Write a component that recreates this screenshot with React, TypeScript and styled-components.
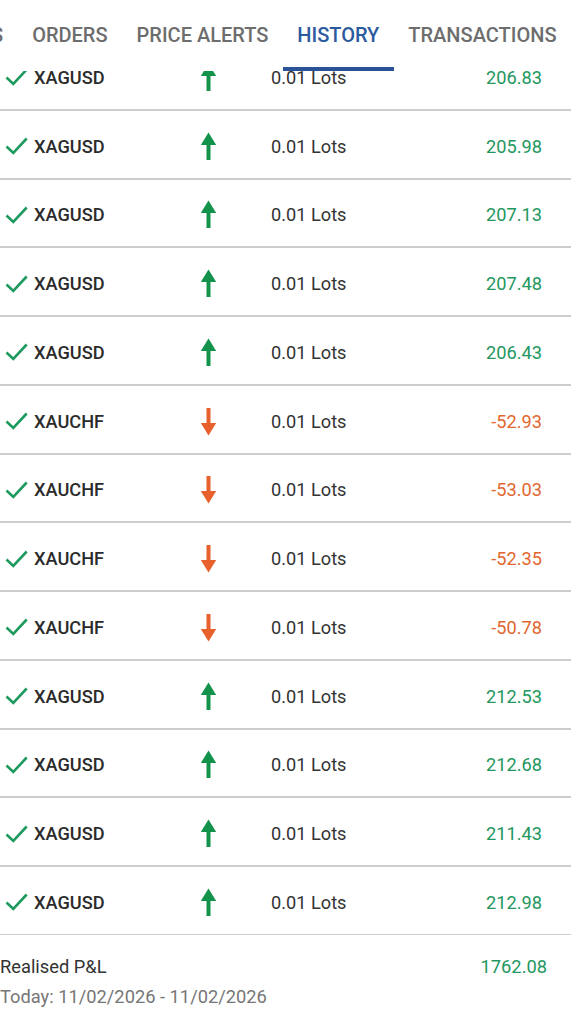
import React from "react";
import styled, { createGlobalStyle } from "styled-components";

const GlobalStyle = createGlobalStyle`
  html, body {
    margin: 0;
    padding: 0;
    background: #ffffff;
  }
  body {
    font-family: Roboto, "Noto Sans", "Liberation Sans", sans-serif;
  }
`;

const Page = styled.div`
  height: 100vh;
  display: flex;
  flex-direction: column;
  overflow: hidden;
  background: #ffffff;
`;

const TabBar = styled.div`
  height: 71px;
  flex-shrink: 0;
  display: flex;
  justify-content: flex-end;
  overflow: hidden;
  background: #ffffff;
`;

const Tab = styled.div<{ $active?: boolean }>`
  flex-shrink: 0;
  box-sizing: border-box;
  height: 71px;
  padding: 2px 14.5px 0;
  display: flex;
  align-items: center;
  white-space: nowrap;
  font-size: 20px;
  font-weight: 500;
  color: ${(p) => (p.$active ? "#2c5a9e" : "#6d6d6d")};
  border-bottom: 4px solid ${(p) => (p.$active ? "#2a5296" : "transparent")};
`;

const ListViewport = styled.div`
  flex: 1;
  overflow: hidden;
`;

const ListContent = styled.div`
  margin-top: -29px;
`;

const Row = styled.div`
  box-sizing: border-box;
  height: 68.75px;
  padding: 4px 29px 0 5px;
  border-bottom: 2px solid #cdcdcd;
  display: grid;
  grid-template-columns: 29px 160px 28px 1fr auto;
  align-items: center;
  font-size: 18.2px;
`;

const CheckCell = styled.div`
  display: flex;
  align-items: center;
`;

const Symbol = styled.div`
  font-weight: 500;
  color: #2b2b2b;
`;

const ArrowCell = styled.div`
  display: flex;
  justify-content: center;
  align-items: center;
`;

const Lots = styled.div`
  margin-left: 49px;
  color: #333333;
`;

const Value = styled.div<{ $up: boolean }>`
  text-align: right;
  color: ${(p) => (p.$up ? "#239760" : "#e2672f")};
`;

const Footer = styled.div`
  flex-shrink: 0;
  height: 88px;
  box-sizing: border-box;
  padding: 16.5px 24px 0 0;
  display: grid;
  grid-template-columns: 1fr auto;
  grid-auto-rows: 30px;
  align-items: center;
  font-size: 18.3px;
`;

const FooterLabel = styled.div`
  color: #333333;
`;

const FooterValue = styled.div`
  color: #239760;
  text-align: right;
`;

const FooterDate = styled.div`
  grid-column: 1 / -1;
  color: #767676;
`;

const CheckIcon = () => (
  <svg width="23" height="18" viewBox="0 0 23 18" fill="none">
    <polyline
      points="1.5,9.5 8.3,16 21.7,1.5"
      stroke="#1e9a5e"
      strokeWidth="2.6"
      strokeLinecap="butt"
      strokeLinejoin="miter"
    />
  </svg>
);

const ArrowIcon = ({ up }: { up: boolean }) => (
  <svg
    width="17"
    height="29"
    viewBox="0 0 17 29"
    style={{ transform: up ? undefined : "rotate(180deg)" }}
  >
    <g fill={up ? "#12924b" : "#e8612c"}>
      <polygon points="0.8,13 16.2,13 8.5,0.6" />
      <rect x="6.5" y="12.5" width="4" height="15.5" />
    </g>
  </svg>
);

type Trade = { symbol: string; up: boolean; value: string };

const trades: Trade[] = [
  { symbol: "XAGUSD", up: true, value: "206.83" },
  { symbol: "XAGUSD", up: true, value: "205.98" },
  { symbol: "XAGUSD", up: true, value: "207.13" },
  { symbol: "XAGUSD", up: true, value: "207.48" },
  { symbol: "XAGUSD", up: true, value: "206.43" },
  { symbol: "XAUCHF", up: false, value: "-52.93" },
  { symbol: "XAUCHF", up: false, value: "-53.03" },
  { symbol: "XAUCHF", up: false, value: "-52.35" },
  { symbol: "XAUCHF", up: false, value: "-50.78" },
  { symbol: "XAGUSD", up: true, value: "212.53" },
  { symbol: "XAGUSD", up: true, value: "212.68" },
  { symbol: "XAGUSD", up: true, value: "211.43" },
  { symbol: "XAGUSD", up: true, value: "212.98" },
];

const tabs = ["POSITIONS", "ORDERS", "PRICE ALERTS", "HISTORY", "TRANSACTIONS"];

export default function App() {
  return (
    <Page>
      <GlobalStyle />
      <TabBar>
        {tabs.map((t) => (
          <Tab key={t} $active={t === "HISTORY"}>
            {t}
          </Tab>
        ))}
      </TabBar>
      <ListViewport>
        <ListContent>
          {trades.map((tr, i) => (
            <Row key={i}>
              <CheckCell>
                <CheckIcon />
              </CheckCell>
              <Symbol>{tr.symbol}</Symbol>
              <ArrowCell>
                <ArrowIcon up={tr.up} />
              </ArrowCell>
              <Lots>0.01 Lots</Lots>
              <Value $up={tr.up}>{tr.value}</Value>
            </Row>
          ))}
        </ListContent>
      </ListViewport>
      <Footer>
        <FooterLabel>Realised P&amp;L</FooterLabel>
        <FooterValue>1762.08</FooterValue>
        <FooterDate>Today: 11/02/2026 - 11/02/2026</FooterDate>
      </Footer>
    </Page>
  );
}
